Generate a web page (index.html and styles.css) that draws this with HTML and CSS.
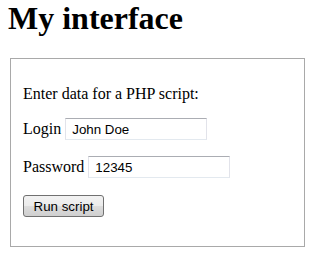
FILE: index.html
```html
<!DOCTYPE html>
<html>
<head>
<meta charset="utf-8">
<title>My interface</title>
<link rel="stylesheet" href="styles.css">
</head>
<body>
<h1 class="title">My interface</h1>
<form class="panel">
  <p class="intro">Enter data for a PHP script:</p>
  <p class="row row-login">Login <input class="field" type="text" value="John Doe"></p>
  <p class="row row-pass">Password <input class="field" type="text" value="12345"></p>
  <p class="row row-btn"><button class="btn" type="button">Run script</button></p>
</form>
</body>
</html>
```
FILE: styles.css
```css
html, body {
  background: #ffffff;
}
body {
  margin: 0 8px;
  font-family: "Liberation Serif", "Times New Roman", serif;
  font-size: 16px;
  color: #000000;
}
.title {
  margin: 0 0 21px 0;
  font-size: 32px;
  line-height: 37px;
  height: 37px;
  font-weight: bold;
}
.panel {
  margin: 0 2px;
  border: 1px solid #a9a9a9;
  padding: 26px 12px 29px 12px;
  display: flex;
  flex-direction: column;
  height: 189px;
  box-sizing: border-box;
}
.intro {
  margin: 0;
  line-height: 18px;
  height: 18px;
}
.row {
  margin: 0;
  display: flex;
  align-items: baseline;
  white-space: pre;
  height: 22px;
}
.row-login {
  margin-top: 15px;
}
.row-pass {
  margin-top: 16px;
}
.row-btn {
  margin-top: 17px;
}
.field {
  box-sizing: border-box;
  width: 142px;
  height: 22px;
  margin: 0;
  padding: 0 4px 0 6px;
  border: 1px solid #e2e3ea;
  border-top-color: #abadb3;
  border-bottom-color: #e3e9ef;
  font-family: "Liberation Sans", Arial, sans-serif;
  font-size: 13.33px;
  color: #000000;
  background: #ffffff;
  outline: none;
}
.btn {
  box-sizing: border-box;
  width: 81px;
  height: 22px;
  margin: 0;
  padding: 0;
  border: 1px solid #707070;
  border-radius: 3px;
  background: linear-gradient(#f2f2f2 0%, #ebebeb 50%, #dddddd 50%, #cfcfcf 100%);
  font-family: "Liberation Sans", Arial, sans-serif;
  font-size: 13.33px;
  color: #000000;
}
```
